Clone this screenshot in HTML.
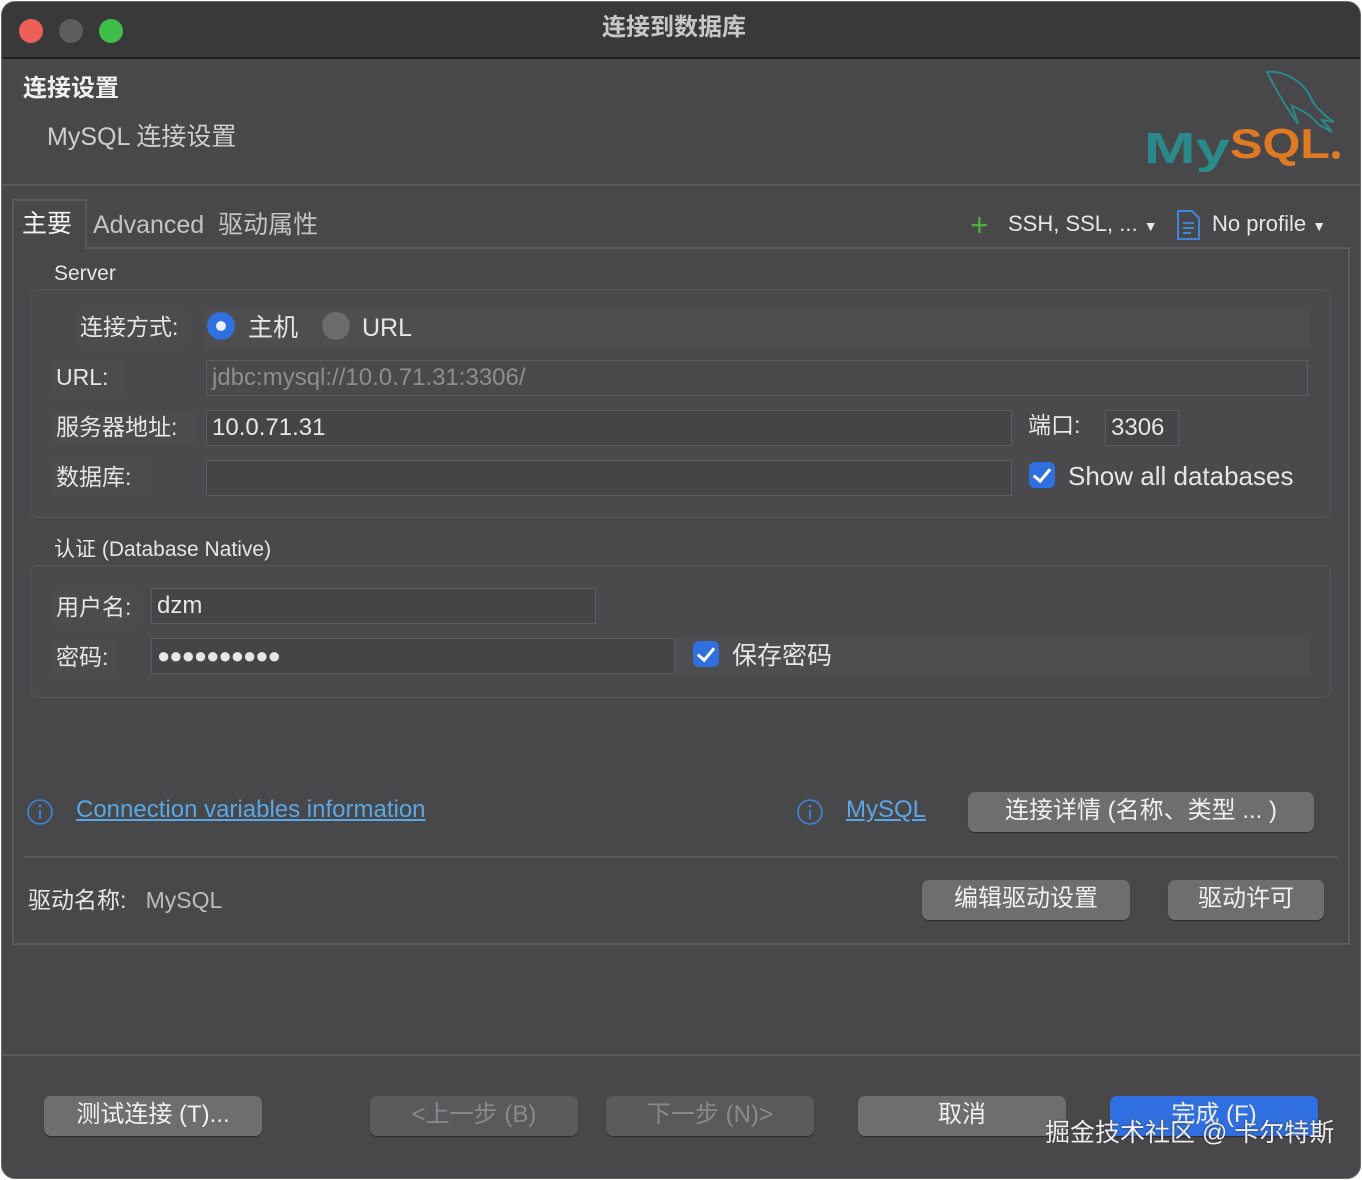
<!DOCTYPE html>
<html><head><meta charset="utf-8"><style>
*{box-sizing:border-box;margin:0;padding:0}
body{width:1362px;height:1180px;background:#fff;position:relative;overflow:hidden;font-family:"Liberation Sans","Noto Sans CJK SC",sans-serif;color:#e6e6e6}
.a{position:absolute}
.win{left:1px;top:1px;width:1360px;height:1178px;background:#48484b;border-radius:14px;overflow:hidden;border:1px solid #6a6a6a}
.t{font-size:23px;white-space:nowrap;line-height:1.2}
.inp{position:absolute;background:#454548;border:1px solid #5c5c60;height:36px;font-size:24px;padding-left:5px;line-height:34px}
.lab{position:absolute;background:#4c4c4f;height:36px;font-size:23px;line-height:34px;padding-left:4px}
.box{position:absolute;border:1px solid #58585c;border-radius:8px;background:#4a4a4d}
.btn{position:absolute;background:#6e6e71;border-radius:7px;height:40px;font-size:24px;text-align:center;line-height:38px;color:#f0f0f0;box-shadow:0 1px 1px #2a2a2a}
.dis{background:#5a5a5d;color:#8a8a8c}
.cb{position:absolute;width:26px;height:26px;border-radius:6px;background:#2f6fdf}
.cb:after{content:"";position:absolute;left:8px;top:3px;width:7px;height:14px;border:solid #fff;border-width:0 3px 3px 0;transform:rotate(40deg)}
.link{color:#5aa7e6;text-decoration:underline;font-size:24px;line-height:1.2}
</style></head><body>
<div class="a win">
 <div class="a" style="left:0;top:0;width:1360px;height:57px;background:#39393b;border-bottom:2px solid #1e1e1e"></div>
 <div class="a" style="left:17px;top:17px;width:24px;height:24px;border-radius:50%;background:#ec5f57"></div>
 <div class="a" style="left:57px;top:17px;width:24px;height:24px;border-radius:50%;background:#5d5d5f"></div>
 <div class="a" style="left:97px;top:17px;width:24px;height:24px;border-radius:50%;background:#3fbf4a"></div>
 <div class="a t" style="left:600px;top:12px;font-size:24px;font-weight:bold;color:#c8c8c8">连接到数据库</div>
 <div class="a t" style="left:21px;top:73px;font-weight:bold;font-size:24px;color:#f0f0f0">连接设置</div>
 <div class="a t" style="left:45px;top:120px;font-size:25px;color:#cfcfcf">MySQL 连接设置</div>
 <svg class="a" style="left:1140px;top:64px" width="206" height="110" viewBox="0 0 206 110">
  <path d="M125 6 C140 4 160 14 168 30 C172 40 180 48 192 56 L180 54 L190 66 L176 58 C170 50 160 44 150 40 L156 58 L148 46 C140 34 132 20 125 6 Z" fill="none" stroke="#2a8a8a" stroke-width="2"/>
  <text x="2" y="97" font-family="Liberation Sans" font-size="44" fill="#2a8a8a" font-weight="bold" textLength="86" lengthAdjust="spacingAndGlyphs">My</text>
  <text x="88" y="92" font-family="Liberation Sans" font-size="42" fill="#e07a22" font-weight="bold" textLength="100" lengthAdjust="spacingAndGlyphs">SQL</text>
  <circle cx="194" cy="89" r="4" fill="#e07a22"/>
 </svg>
 <div class="a" style="left:0;top:182px;width:1360px;height:2px;background:#5a5a5d"></div>
 <div class="a" style="left:10px;top:197px;width:1338px;height:746px;border:2px solid #5a5a5d"></div>
 <div class="a" style="left:83px;top:197px;width:1265px;height:50px;border-left:2px solid #5a5a5d;border-bottom:2px solid #5a5a5d;background:#48484b"></div>
 <div class="a t" style="left:20px;top:207px;font-size:25px;color:#f4f4f4">主要</div>
 <div class="a t" style="left:91px;top:208px;font-size:25px;color:#c4c4c4">Advanced&nbsp;&nbsp;驱动属性</div>
 <div class="a t" style="left:968px;top:204px;font-size:32px;color:#4cae3f">+</div>
 <div class="a t" style="left:1006px;top:209px;font-size:22px">SSH, SSL, ... <span style="font-size:14px">▼</span></div>
 <svg class="a" style="left:1174px;top:207px" width="26" height="32"><path d="M2 2 H16 L23 9 V30 H2 Z" fill="none" stroke="#3f86d6" stroke-width="2"/><path d="M7 14 H18 M7 19 H18 M7 24 H15" stroke="#3f86d6" stroke-width="2"/></svg>
 <div class="a t" style="left:1210px;top:209px;font-size:22px">No profile <span style="font-size:14px">▼</span></div>

 <div class="a t" style="left:52px;top:259px;font-size:21px">Server</div>
 <div class="box" style="left:28px;top:287px;width:1301px;height:229px"></div>
 <div class="a" style="left:202px;top:308px;width:1106px;height:38px;background:#4e4e51"></div>
 <div class="lab" style="left:74px;top:308px;width:110px">连接方式:</div>
 <div class="a" style="left:205px;top:310px;width:28px;height:28px;border-radius:50%;background:#2f6fdf"></div>
 <div class="a" style="left:214px;top:319px;width:10px;height:10px;border-radius:50%;background:#e6eeff"></div>
 <div class="a t" style="left:246px;top:311px;font-size:25px;line-height:30px">主机</div>
 <div class="a" style="left:320px;top:310px;width:28px;height:28px;border-radius:50%;background:#6c6c6e"></div>
 <div class="a t" style="left:360px;top:311px;font-size:25px;line-height:30px">URL</div>
 <div class="lab" style="left:50px;top:358px;width:72px">URL:</div>
 <div class="inp" style="left:204px;top:358px;width:1102px;color:#8e8e90;background:#4a4a4d">jdbc:mysql://10.0.71.31:3306/</div>
 <div class="lab" style="left:50px;top:408px;width:144px">服务器地址:</div>
 <div class="inp" style="left:204px;top:408px;width:806px">10.0.71.31</div>
 <div class="a t" style="left:1026px;top:410px">端口:</div>
 <div class="inp" style="left:1103px;top:408px;width:74px">3306</div>
 <div class="lab" style="left:50px;top:458px;width:94px">数据库:</div>
 <div class="inp" style="left:204px;top:458px;width:806px"></div>
 <div class="cb" style="left:1027px;top:460px"></div>
 <div class="a t" style="left:1066px;top:459px;font-size:26px">Show all databases</div>

 <div class="a t" style="left:52px;top:535px;font-size:21px">认证 (Database Native)</div>
 <div class="box" style="left:28px;top:563px;width:1301px;height:133px"></div>
 <div class="a" style="left:150px;top:636px;width:1158px;height:38px;background:#4e4e51"></div>
 <div class="lab" style="left:50px;top:588px;width:86px">用户名:</div>
 <div class="inp" style="left:149px;top:586px;width:445px">dzm</div>
 <div class="lab" style="left:50px;top:638px;width:64px">密码:</div>
 <div class="inp" style="left:149px;top:636px;width:524px;font-size:22px;letter-spacing:-1px">●●●●●●●●●●</div>
 <div class="cb" style="left:691px;top:639px"></div>
 <div class="a t" style="left:730px;top:639px;font-size:25px;line-height:30px">保存密码</div>

 <svg class="a" style="left:24px;top:796px" width="28" height="28"><circle cx="14" cy="14" r="12" fill="none" stroke="#3f86d6" stroke-width="1.6"/><path d="M14 12 V21" stroke="#3f86d6" stroke-width="1.8"/><circle cx="14" cy="8" r="1.3" fill="#3f86d6"/></svg>
 <div class="a link" style="left:74px;top:794px">Connection variables information</div>
 <svg class="a" style="left:794px;top:796px" width="28" height="28"><circle cx="14" cy="14" r="12" fill="none" stroke="#3f86d6" stroke-width="1.6"/><path d="M14 12 V21" stroke="#3f86d6" stroke-width="1.8"/><circle cx="14" cy="8" r="1.3" fill="#3f86d6"/></svg>
 <div class="a link" style="left:844px;top:794px">MySQL</div>
 <div class="btn" style="left:966px;top:790px;width:346px">连接详情 (名称、类型 ... )</div>
 <div class="a" style="left:22px;top:854px;width:1314px;height:2px;background:#58585b"></div>
 <div class="a t" style="left:26px;top:885px">驱动名称:&nbsp;&nbsp;&nbsp;<span style="color:#bdbdbd">MySQL</span></div>
 <div class="btn" style="left:920px;top:878px;width:208px">编辑驱动设置</div>
 <div class="btn" style="left:1166px;top:878px;width:156px">驱动许可</div>

 <div class="a" style="left:0;top:1052px;width:1360px;height:2px;background:#5a5a5d"></div>
 <div class="btn" style="left:42px;top:1094px;width:218px">测试连接 (T)...</div>
 <div class="btn dis" style="left:368px;top:1094px;width:208px">&lt;上一步 (B)</div>
 <div class="btn dis" style="left:604px;top:1094px;width:208px">下一步 (N)&gt;</div>
 <div class="btn" style="left:856px;top:1094px;width:208px">取消</div>
 <div class="btn" style="left:1108px;top:1094px;width:208px;background:#2f6fdf">完成 (F)</div>
 <div class="a t" style="left:1043px;top:1116px;font-size:25px;color:#eee;text-shadow:0 0 2px #333">掘金技术社区 @ 卡尔特斯</div>
</div>
</body></html>
